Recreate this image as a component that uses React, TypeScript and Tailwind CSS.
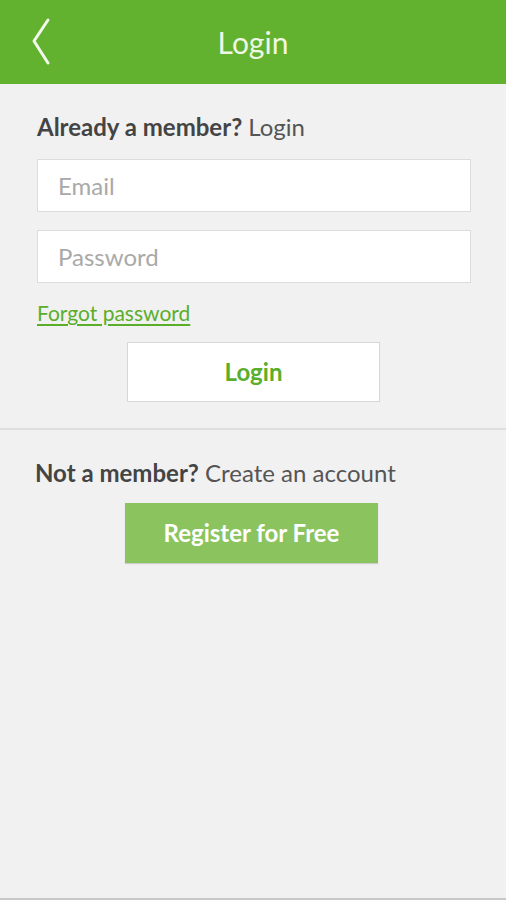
const font = { fontFamily: 'Lato, "Open Sans", sans-serif' }

export default function App() {
  return (
    <div className="flex h-[900px] w-full flex-col bg-[#f1f1f1]" style={font}>
      <header className="relative flex h-[84px] items-center justify-center bg-[#63b22f]">
        <button className="absolute left-[24px] top-[17px] text-[#f2f8ec]">
          <svg width="34" height="50" viewBox="0 0 34 50" fill="none">
            <path d="M24 3 L10 24 L24 46" stroke="currentColor" strokeWidth="3" strokeLinecap="round" strokeLinejoin="round" />
          </svg>
        </button>
        <h1 className="text-[30px] font-normal text-[#eef7e6]">Login</h1>
      </header>

      <section className="flex flex-col px-[37px] pt-[29px]">
        <p className="text-[24px] leading-[28px] text-[#555]">
          <span className="font-bold text-[#444]">Already a member?</span> Login
        </p>
        <input
          placeholder="Email"
          className="mt-[18px] h-[53px] w-[434px] border border-[#dcdcdc] bg-white px-[20px] text-[24px] text-[#555] placeholder:text-[#a9a9a9] outline-none"
        />
        <input
          type="password"
          placeholder="Password"
          className="mt-[18px] h-[53px] w-[434px] border border-[#dcdcdc] bg-white px-[20px] text-[24px] text-[#555] placeholder:text-[#a9a9a9] outline-none"
        />
        <a href="#" className="mt-[17px] self-start text-[21px] leading-[26px] text-[#5aae2a] underline underline-offset-[3px]">
          Forgot password
        </a>
        <button className="mt-[16px] ml-[90px] h-[60px] w-[253px] border border-[#d6d6d6] bg-white text-[24px] font-bold text-[#5aae2a]">
          Login
        </button>
      </section>

      <div className="mt-[26px] h-[2px] w-full bg-[#dedede]" />

      <section className="flex flex-col px-[35px] pt-[28px]">
        <p className="text-[24px] leading-[30px] text-[#555]">
          <span className="font-bold text-[#444]">Not a member?</span> Create an account
        </p>
        <button className="mt-[15px] ml-[90px] h-[60px] w-[253px] bg-[#8bc45f] text-[24px] font-bold text-white shadow-[0_1px_1px_rgba(0,0,0,0.15)]">
          Register for Free
        </button>
      </section>

      <div className="mt-auto h-[2px] w-full bg-[#c8c8c8]" />
    </div>
  )
}
